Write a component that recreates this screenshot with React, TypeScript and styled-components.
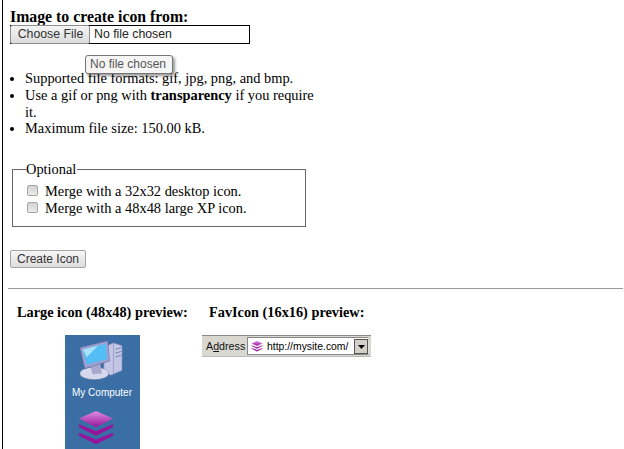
import React from "react";
import styled, { createGlobalStyle } from "styled-components";

const Global = createGlobalStyle`
  html, body { margin: 0; padding: 0; background: #fff; overflow: hidden; }
  body { font-family: "Liberation Serif", "Times New Roman", serif; font-size: 14.4px; color: #000; }
`;
const Page = styled.div`
  width: 621px; height: 449px; margin-left: 2px; border-left: 1px solid #000;
  position: relative; overflow: hidden; box-sizing: border-box; padding-top: 9px;
`;
const Title = styled.div`
  font-weight: bold; font-size: 15.8px; line-height: 16px; margin-left: 7px; height: 16px;
`;
const FileBox = styled.div`
  display: flex; align-items: center; width: 240px; height: 19px; box-sizing: border-box;
  border: 1px solid #000; margin: 0 0 0 7px;
  font: 12.3px/17px Arial, "Liberation Sans", sans-serif; color: #222;
`;
const ChooseBtn = styled.span`
  display: flex; align-items: center; justify-content: center; width: 80px; height: 19px; flex: none;
  margin: -1px 0 0 -1px; padding-left: 1px; box-sizing: border-box; border: 1px solid #8f8f8f; border-radius: 2px;
  background: linear-gradient(#f4f4f4, #dcdcdc); color: #333;
`;
const FileName = styled.span`
  padding-left: 4px; margin-top: -1px;
`;
const Tooltip = styled.div`
  position: absolute; left: 82px; top: 55px; width: 88px; height: 19px; box-sizing: border-box;
  border: 1px solid #767676; border-radius: 3px; background: #f5f5f5; padding-right: 2px;
  box-shadow: 2px 2px 3px rgba(0,0,0,.4); font: 12px/17px Arial, "Liberation Sans", sans-serif;
  color: #555; text-align: center; z-index: 2;
`;
const Bullets = styled.ul`
  width: 294px; margin: 26px 0 0 0; padding-left: 22px; line-height: 16.8px;
`;
const Fieldset = styled.fieldset`
  width: 294px; height: 66px; box-sizing: border-box; margin: 24px 0 0 9px; padding: 0 0 0 14px;
  border: 1px solid #666; font-size: 14.4px;
`;
const Legend = styled.legend`
  padding: 0 1px 0 0; margin-left: -1px; line-height: 16px;
`;
const Opts = styled.div`
  margin-top: 6px;
`;
const OptRow = styled.div`
  display: flex; align-items: center; height: 17px; gap: 7px;
`;
const Check = styled.span`
  width: 11px; height: 11px; border: 1px solid #a5a5a5; border-radius: 2px; box-sizing: border-box; flex: none;
  background: linear-gradient(#d2d2d2, #ececec); margin-top: -2px;
`;
const CreateBtn = styled.button`
  display: block; width: 76px; height: 18px; margin: 23px 0 0 7px; padding: 0; box-sizing: border-box;
  border: 1px solid #a5a5a5; border-radius: 2px; background: linear-gradient(#f5f5f5, #dedede);
  font: 12px Arial, "Liberation Sans", sans-serif; color: #333;
`;
const Rule = styled.hr`
  width: 615px; height: 1px; margin: 20px 0 0 5px; border: 0; background: #9a9a9a;
`;
const Previews = styled.div`
  display: flex; margin-top: 15px; font-weight: bold; font-size: 14.3px; line-height: 17px;
`;
const LargeCol = styled.div`
  width: 192px; margin-left: 14px; flex: none;
`;
const FavCol = styled.div`
  flex: none;
`;
const Images = styled.div`
  display: flex; margin-top: 14px; align-items: flex-start;
`;
const Desktop = styled.div`
  width: 75px; height: 114px; margin-left: 62px; flex: none; background: #3a6ea5;
  display: flex; flex-direction: column; padding-left: 7px; box-sizing: border-box;
`;
const DesktopLabel = styled.div`
  font: 10px/12px Tahoma, "Liberation Sans", sans-serif; color: #fff; margin-top: 6px; white-space: nowrap;
`;
const LargeLayers = styled.div`
  margin: 12px 0 0 5px;
`;
const AddressBar = styled.div`
  width: 169px; height: 22px; margin-left: 62px; flex: none; box-sizing: border-box;
  border-top: 1px solid #888; border-bottom: 1px solid #bbb; background: #d8d8d0;
  display: flex; align-items: center; font: 10.7px Tahoma, "Liberation Sans", sans-serif; color: #111;
`;
const AddrLabel = styled.span`
  flex: none; width: 45px; box-sizing: border-box; padding-left: 4px; & u { text-decoration: underline; }
`;
const AddrField = styled.div`
  width: 122px; height: 18px; box-sizing: border-box; border: 1px solid #888; border-right-color: #ddd;
  background: #fff; display: flex; align-items: center; gap: 4px; padding-left: 3px; font-size: 10.4px; color: #000;
  position: relative; white-space: nowrap;
`;
const Drop = styled.span`
  position: absolute; right: 0; top: 1px; width: 14px; height: 15px; background: #d4d0c8;
  border: 1px solid #555; box-sizing: border-box; display: flex; align-items: center; justify-content: center;
`;

const Layers: React.FC<{ size: number; id: string }> = ({ size, id }) => (
  <svg width={size} height={size * 0.9} viewBox="0 0 40 36" style={{ flex: "none", display: "block" }}>
    <path d="M2 23 L20 30 L38 23 L38 26 L20 35 L2 26 Z" fill="#97159b" />
    <path d="M2 14 L20 21 L38 14 L38 17 L20 26 L2 17 Z" fill="#97159b" />
    <defs>
      <linearGradient id={id} x1="0" y1="0" x2="0" y2="1">
        <stop offset="0" stopColor="#e08ee0" />
        <stop offset="1" stopColor="#97159b" />
      </linearGradient>
    </defs>
    <path d="M20 0 L38 8 L20 17 L2 8 Z" fill={`url(#${id})`} />
  </svg>
);

const Computer = () => (
  <svg width="44" height="42" viewBox="0 0 46 42" style={{ marginTop: 4, marginLeft: 7, display: "block" }}>
    <path d="M26 8 L36 3 L45 6 L45 32 L33 37 L26 32 Z" fill="#c4c6e6" stroke="#7f82b5" strokeWidth=".6" />
    <path d="M36 3 L36 37" stroke="#8c8fc0" strokeWidth=".7" />
    <path d="M38 10 L44 8 M38 14 L44 12 M38 18 L44 16" stroke="#777aa8" strokeWidth="1" />
    <ellipse cx="16" cy="35" rx="15" ry="6.5" fill="#d6d8ec" stroke="#8a8cb0" strokeWidth=".5" />
    <path d="M12 26 L22 24 L24 35 L14 36 Z" fill="#a6a9cc" />
    <path d="M1 8 L30 1 L32 22 L6 30 Z" fill="#9ea2d0" stroke="#6669a0" strokeWidth=".6" />
    <path d="M4 10 L28 4 L29.5 20 L8 26 Z" fill="#54bdf5" />
    <path d="M4 10 L20 6 L8 18 Z" fill="#a6e4fb" />
  </svg>
);

export default function App() {
  return (
    <Page>
      <Global />
      <Title>Image to create icon from:</Title>
      <FileBox>
        <ChooseBtn>Choose File</ChooseBtn>
        <FileName>No file chosen</FileName>
      </FileBox>
      <Tooltip>No file chosen</Tooltip>
      <Bullets>
        <li>Supported file formats: gif, jpg, png, and bmp.</li>
        <li>Use a gif or png with <b>transparency</b> if you require it.</li>
        <li>Maximum file size: 150.00 kB.</li>
      </Bullets>
      <Fieldset>
        <Legend>Optional</Legend>
        <Opts>
          <OptRow><Check />Merge with a 32x32 desktop icon.</OptRow>
          <OptRow><Check />Merge with a 48x48 large XP icon.</OptRow>
        </Opts>
      </Fieldset>
      <CreateBtn>Create Icon</CreateBtn>
      <Rule />
      <Previews>
        <LargeCol>Large icon (48x48) preview:</LargeCol>
        <FavCol>FavIcon (16x16) preview:</FavCol>
      </Previews>
      <Images>
        <Desktop>
          <Computer />
          <DesktopLabel>My Computer</DesktopLabel>
          <LargeLayers><Layers size={38} id="layLarge" /></LargeLayers>
        </Desktop>
        <AddressBar>
          <AddrLabel>A<u>d</u>dress</AddrLabel>
          <AddrField>
            <Layers size={12} id="laySmall" />
            http://mysite.com/
            <Drop>
              <svg width="7" height="4" viewBox="0 0 7 4"><path d="M0 0H7L3.5 4Z" fill="#000" /></svg>
            </Drop>
          </AddrField>
        </AddressBar>
      </Images>
    </Page>
  );
}
